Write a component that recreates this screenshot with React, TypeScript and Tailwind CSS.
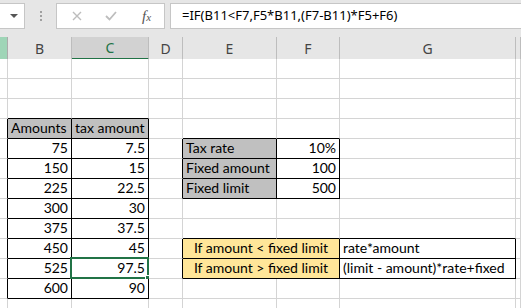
import React from 'react';

type Cell = {
  text?: string;
  align?: 'left' | 'right' | 'center';
  bg?: string;
  span?: number;
};

// sheet rows, 0 = first visible row under the column header
const cells: Record<string, Cell> = {
  '3-1': { text: 'Amounts', align: 'left', bg: 'bg-[#c0c0c0]' },
  '3-2': { text: 'tax amount', align: 'left', bg: 'bg-[#c0c0c0]' },
  '4-1': { text: '75' }, '4-2': { text: '7.5' },
  '5-1': { text: '150' }, '5-2': { text: '15' },
  '6-1': { text: '225' }, '6-2': { text: '22.5' },
  '7-1': { text: '300' }, '7-2': { text: '30' },
  '8-1': { text: '375' }, '8-2': { text: '37.5' },
  '9-1': { text: '450' }, '9-2': { text: '45' },
  '10-1': { text: '525' }, '10-2': { text: '97.5' },
  '11-1': { text: '600' }, '11-2': { text: '90' },
  '4-4': { text: 'Tax rate', align: 'left', bg: 'bg-[#c0c0c0]' },
  '4-5': { text: '10%' },
  '5-4': { text: 'Fixed amount', align: 'left', bg: 'bg-[#c0c0c0]' },
  '5-5': { text: '100' },
  '6-4': { text: 'Fixed limit', align: 'left', bg: 'bg-[#c0c0c0]' },
  '6-5': { text: '500' },
  '9-4': { text: 'If amount < fixed limit', align: 'center', bg: 'bg-[#ffe699]', span: 2 },
  '9-6': { text: 'rate*amount', align: 'left' },
  '10-4': { text: 'If amount > fixed limit', align: 'center', bg: 'bg-[#ffe699]', span: 2 },
  '10-6': { text: '(limit - amount)*rate+fixed', align: 'left' },
};

const tables = [
  { r0: 3, r1: 11, c0: 1, c1: 2 },
  { r0: 4, r1: 6, c0: 4, c1: 5 },
  { r0: 9, r1: 10, c0: 4, c1: 6 },
];

const inTable = (r: number, c: number) =>
  tables.some((t) => r >= t.r0 && r <= t.r1 && c >= t.c0 && c <= t.c1);

const cols = ['', 'B', 'C', 'D', 'E', 'F', 'G', ''];
const ROWS = 13;
const gridCols = 'grid grid-cols-[8px_64px_77px_34px_94px_63px_176px_1fr]';

function HeaderRow() {
  return (
    <div className={`${gridCols} h-[22px] bg-[#e6e6e6] text-[14px] text-[#444]`}>
      {cols.map((c, i) => {
        if (i === 0) return <div key={i} className="bg-[#9fd5b7] border-r border-b border-[#ababab]" />;
        if (c === 'C')
          return (
            <div key={i} className="bg-[#d2d2d2] border-r border-[#bdbdbd] border-b-2 border-b-[#217346] flex items-center justify-center text-[#217346]">
              {c}
            </div>
          );
        return (
          <div key={i} className="border-r border-b border-[#bdbdbd] border-b-[#ababab] flex items-center justify-center">
            {c}
          </div>
        );
      })}
    </div>
  );
}

function Grid() {
  const out: React.ReactNode[] = [];
  for (let r = 0; r < ROWS; r++) {
    for (let c = 0; c < cols.length; c++) {
      const cell = cells[`${r}-${c}`];
      if (c === 5 && cells[`${r}-4`]?.span === 2) continue;
      const span = cell?.span ?? 1;
      const last = c + span - 1;
      const blackR = inTable(r, last) || inTable(r, last + 1);
      const blackB = inTable(r, c) || inTable(r + 1, c);
      const align =
        cell?.align === 'left' ? 'justify-start pl-[3px]' : cell?.align === 'center' ? 'justify-center' : 'justify-end pr-[3px]';
      const selected = r === 10 && c === 2;
      out.push(
        <div
          key={`${r}-${c}`}
          className={`relative flex items-end pb-[1px] border-r border-b whitespace-nowrap leading-[18px] ${align} ${
            blackR ? 'border-r-black' : 'border-r-[#d4d4d4]'
          } ${blackB ? 'border-b-black' : 'border-b-[#d4d4d4]'} ${cell?.bg ?? 'bg-white'} ${span === 2 ? 'col-span-2' : ''}`}
        >
          {cell?.text}
          {selected && (
            <>
              <span className="absolute -left-[2px] -top-[2px] -right-px -bottom-px border-2 border-[#217346]" />
              <span className="absolute -right-[3px] -bottom-[3px] w-[6px] h-[6px] bg-[#217346] border border-white" />
            </>
          )}
        </div>
      );
    }
  }
  return <div className={`${gridCols} auto-rows-[20px] text-[14px] text-black`} style={{ fontFamily: 'Lato, sans-serif' }}>{out}</div>;
}

function FormulaBar() {
  return (
    <div className="h-[37px] bg-[#e6e6e6] flex items-start pt-[3px]">
      <div className="w-[25px] h-[26px] bg-white border border-l-0 border-[#c6c6c6] flex items-center justify-center">
        <svg width="8" height="4" viewBox="0 0 8 4" className="ml-[4px]">
          <path d="M0 0h8L4 4z" fill="#555" />
        </svg>
      </div>
      <div className="w-[31px] h-[26px] flex flex-col items-center justify-center gap-[2px]">
        <span className="w-[2px] h-[2px] bg-[#a0a0a0]" />
        <span className="w-[2px] h-[2px] bg-[#a0a0a0]" />
        <span className="w-[2px] h-[2px] bg-[#a0a0a0]" />
      </div>
      <div className="w-[109px] h-[26px] bg-white border border-[#c6c6c6] flex items-center">
        <svg width="10" height="10" viewBox="0 0 10 10" className="ml-[15px]">
          <path d="M1 1l8 8M9 1l-8 8" stroke="#bdbdbd" strokeWidth="1.4" />
        </svg>
        <svg width="12" height="10" viewBox="0 0 12 10" className="ml-[23px]">
          <path d="M1 5l3.5 3.5L11 1" stroke="#bdbdbd" strokeWidth="1.8" fill="none" />
        </svg>
        <span
          className="ml-[25px] text-[15px] italic text-[#555] leading-none"
          style={{ fontFamily: '"Liberation Serif", serif' }}
        >
          f<span className="text-[11px]">x</span>
        </span>
      </div>
      <div className="flex-1 ml-[5px] h-[26px] bg-white border border-r-0 border-[#c6c6c6] flex items-center pl-[11px] text-[13px] text-black" style={{ fontFamily: '"Noto Sans", sans-serif' }}>
        =IF(B11&lt;F7,F5*B11,(F7-B11)*F5+F6)
      </div>
    </div>
  );
}

export default function App() {
  return (
    <div className="w-[521px] h-[308px] overflow-hidden bg-white" style={{ fontFamily: '"Noto Sans", sans-serif' }}>
      <FormulaBar />
      <HeaderRow />
      <Grid />
    </div>
  );
}
